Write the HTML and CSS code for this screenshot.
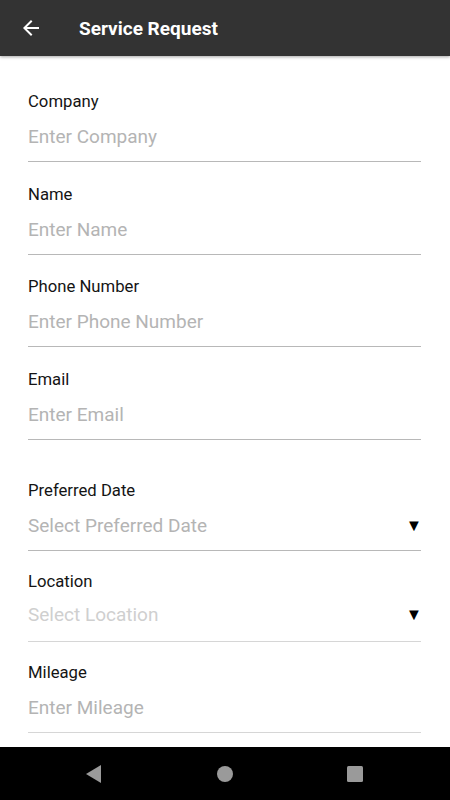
FILE: index.html
```html
<!DOCTYPE html>
<html>
<head>
<meta charset="utf-8">
<link rel="stylesheet" href="styles.css">
</head>
<body>
<div class="screen">
  <header class="appbar">
    <svg class="back" width="24" height="24" viewBox="0 0 24 24"><path d="M20 11H7.83l5.59-5.59L12 4l-8 8 8 8 1.41-1.41L7.83 13H20v-2z" fill="#fff"/></svg>
    <h1 class="title">Service Request</h1>
  </header>
  <main class="form">
    <div class="field">
      <div class="label">Company</div>
      <div class="input">Enter Company</div>
    </div>
    <div class="field">
      <div class="label">Name</div>
      <div class="input">Enter Name</div>
    </div>
    <div class="field">
      <div class="label">Phone Number</div>
      <div class="input">Enter Phone Number</div>
    </div>
    <div class="field">
      <div class="label">Email</div>
      <div class="input">Enter Email</div>
    </div>
    <div class="field field-date">
      <div class="label">Preferred Date</div>
      <div class="input select"><span>Select Preferred Date</span><span class="caret">▼</span></div>
    </div>
    <div class="field field-loc">
      <div class="label">Location</div>
      <div class="input select light"><span>Select Location</span><span class="caret">▼</span></div>
    </div>
    <div class="field field-mil">
      <div class="label">Mileage</div>
      <div class="input lightline">Enter Mileage</div>
    </div>
  </main>
  <nav class="navbar">
    <svg width="18" height="20" viewBox="0 0 18 20"><path d="M16 1 L16 19 L1 10 Z" fill="#9a9a9a"/></svg>
    <svg width="18" height="18" viewBox="0 0 18 18"><circle cx="9" cy="9" r="8" fill="#9a9a9a"/></svg>
    <svg width="18" height="18" viewBox="0 0 18 18"><rect x="1" y="1" width="16" height="16" rx="1.5" fill="#9a9a9a"/></svg>
  </nav>
</div>
</body>
</html>
```
FILE: styles.css
```css
* { box-sizing: border-box; }
html, body { margin: 0; padding: 0; }
body { font-family: Roboto, "Noto Sans", sans-serif; background: #fff; }
.screen { width: 450px; height: 800px; display: flex; flex-direction: column; overflow: hidden; }
.appbar {
  height: 56px; flex: none; background: #333333; display: flex; align-items: center;
  padding-left: 19px; box-shadow: 0 1px 3px rgba(0,0,0,0.35); position: relative; z-index: 1;
}
.back { flex: none; }
.title { margin: 0 0 0 36px; color: #fff; font-size: 19px; font-weight: 700; letter-spacing: 0; }
.form { flex: 1; padding: 36px 29px 0 28px; overflow: hidden; }
.field { margin-bottom: 22.67px; }
.label { font-size: 16.7px; line-height: 20px; color: #141414; }
.input {
  font-size: 19px; line-height: 24px; color: #b4b4b4;
  padding: 13px 0 12px; border-bottom: 1px solid #b8b8b8;
}
.select { display: flex; justify-content: space-between; align-items: center; }
.caret { color: #000; font-size: 16.5px; line-height: 24px; margin-right: -1px; }
.field-date { margin-top: 41px; margin-bottom: 21px; }
.field-date .input { padding-top: 13px; }
.field-loc { margin-bottom: 21px; }
.field-loc .input { padding-top: 11px; padding-bottom: 14px; }
.light { color: #cfcfcf; border-bottom-color: #d6d6d6; }
.lightline { border-bottom-color: #d6d6d6; }
.navbar {
  height: 53px; flex: none; background: #000; display: flex; align-items: center;
  justify-content: space-between; padding: 0 86px 0 85px;
}
```
